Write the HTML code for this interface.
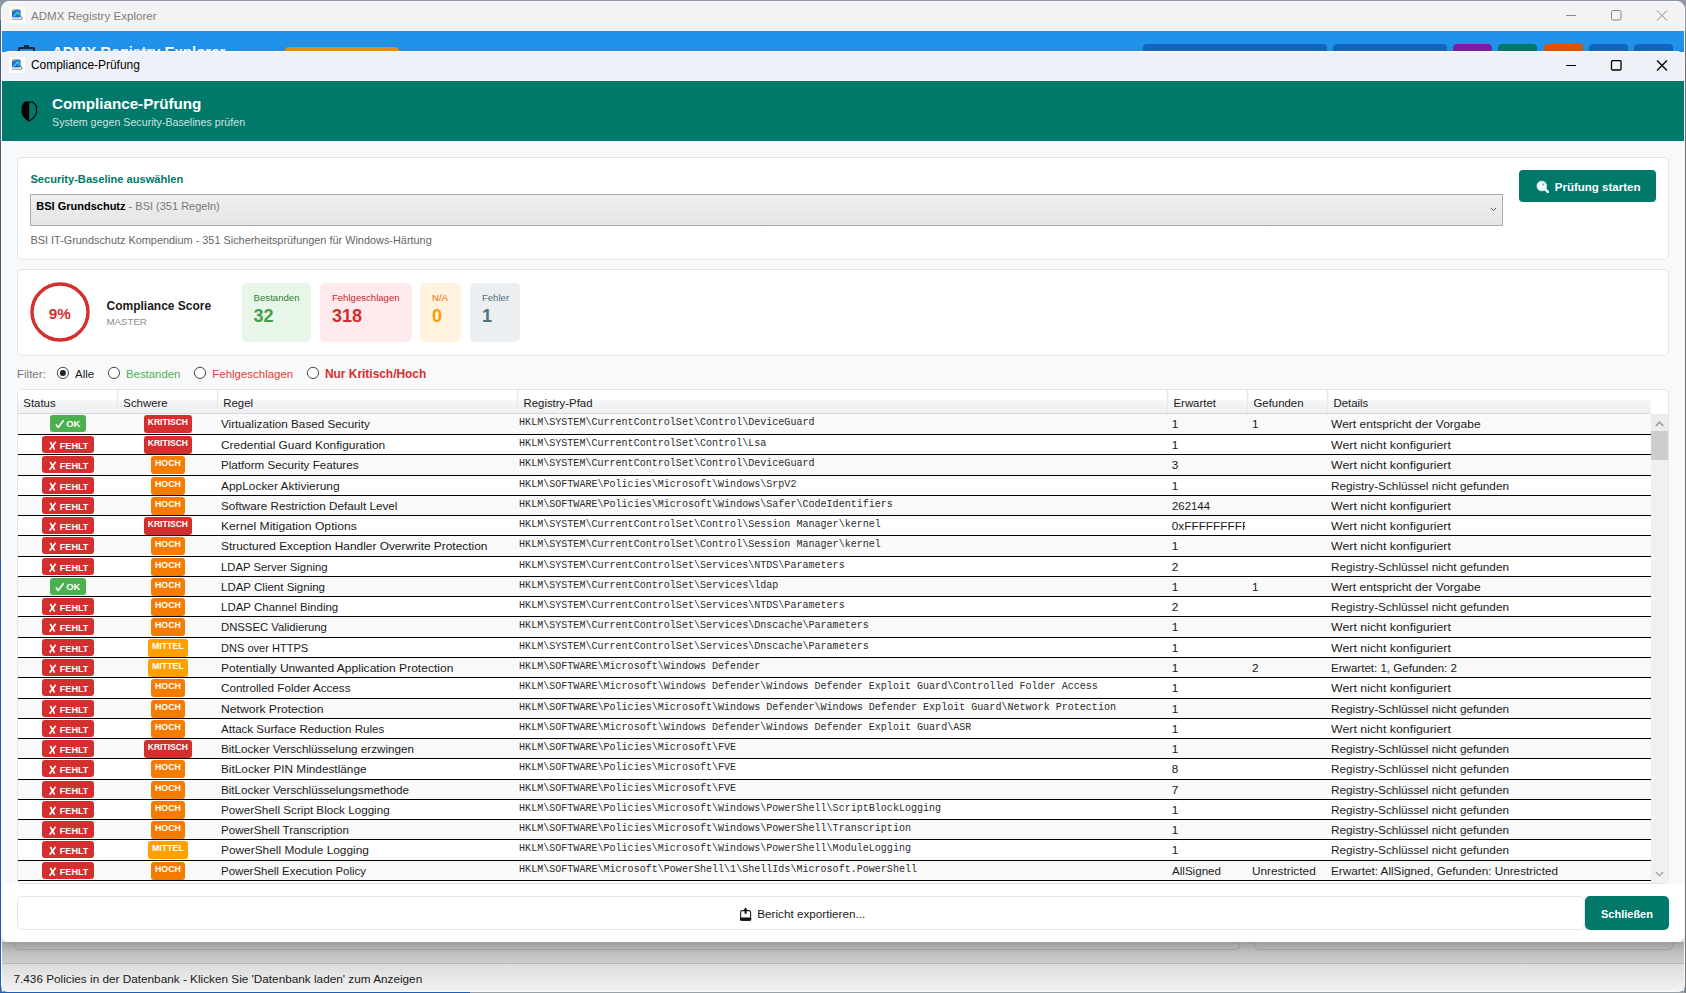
<!DOCTYPE html><html><head><meta charset="utf-8"><style>
*{margin:0;padding:0;box-sizing:border-box}
html,body{width:1686px;height:993px;overflow:hidden;background:#8a96a6;font-family:"Liberation Sans",sans-serif}
.t{position:absolute;white-space:nowrap;line-height:1.117}
.b{position:absolute}
</style></head><body><div class="b" style="left:0px;top:20px;width:1px;height:973px;background:#46647e"></div>
<div class="b" style="left:0px;top:560px;width:1px;height:433px;background:#1d5fb5"></div>
<div class="b" style="left:0px;top:992px;width:470px;height:1px;background:#1d5fb5"></div>
<div class="b" style="left:470px;top:992px;width:1216px;height:1px;background:#9aa0a8"></div>
<div class="b" style="left:1685px;top:30px;width:1px;height:963px;background:#737378"></div>
<div class="b" style="left:1px;top:1px;width:1684px;height:991px;background:#f3f3f3;border-radius:8px 8px 7px 7px;border:1px solid #fbfbfb"></div>
<div class="b" style="left:2px;top:31px;width:1682px;height:21px;background:#2192ea"></div>
<div class="t" style="left:52.00px;top:44.22px;font-size:15px;font-weight:bold;color:#fff;font-family:'Liberation Sans',sans-serif;">ADMX Registry Explorer</div>
<div class="b" style="left:18px;top:47px;width:17px;height:13px;border:2px solid #1b2a3a;border-radius:2px"></div>
<div class="b" style="left:24px;top:45px;width:5px;height:3px;background:#1b2a3a"></div>
<div class="b" style="left:285px;top:47px;width:114px;height:13px;background:#e8900c;border-radius:4px"></div>
<div class="b" style="left:1143px;top:44px;width:184px;height:16px;background:#1565c0;border-radius:4px"></div>
<div class="b" style="left:1333px;top:44px;width:114px;height:16px;background:#1565c0;border-radius:4px"></div>
<div class="b" style="left:1453px;top:44px;width:39px;height:16px;background:#7b1fa2;border-radius:4px"></div>
<div class="b" style="left:1498px;top:44px;width:39px;height:16px;background:#00796b;border-radius:4px"></div>
<div class="b" style="left:1544px;top:44px;width:39px;height:16px;background:#e65100;border-radius:4px"></div>
<div class="b" style="left:1589px;top:44px;width:39px;height:16px;background:#1565c0;border-radius:4px"></div>
<div class="b" style="left:1634px;top:44px;width:39px;height:16px;background:#1565c0;border-radius:4px"></div>
<div class="b" style="left:2px;top:2px;width:1682px;height:29px;background:#f3f3f3;border-radius:7px 7px 0 0"></div>
<svg class="b" style="left:9px;top:7px;" width="16" height="16" viewBox="0 0 16 16"><rect x="0" y="0" width="16" height="16" fill="#fdfdfe"/><rect x="3" y="2.6" width="8.6" height="8" rx="1.4" fill="#1f6fd6"/><rect x="3" y="2.2" width="3.2" height="1.6" rx="0.6" fill="#e8c24a"/><path d="M4.5 9.5 L9.5 4" stroke="#3fd0f0" stroke-width="1.2"/><circle cx="9.8" cy="6.8" r="1.3" fill="#4ccf5a"/><path d="M3 12.3 H13" stroke="#8c98a4" stroke-width="1"/><path d="M10.8 8.5 Q13.5 9.5 13 12" stroke="#5a7a98" stroke-width="1" fill="none"/></svg>
<div class="t" style="left:31.00px;top:9.50px;font-size:11.6px;font-weight:normal;color:#7f7f7f;font-family:'Liberation Sans',sans-serif;">ADMX Registry Explorer</div>
<div class="b" style="left:1566px;top:15px;width:10px;height:1px;background:#8a8a8a"></div><svg class="b" style="left:1610px;top:10px;" width="12" height="11" viewBox="0 0 12 11"><rect x="1.5" y="0.5" width="9.5" height="9.5" rx="1.3" fill="none" stroke="#8a8a8a" stroke-width="1"/></svg><svg class="b" style="left:1656px;top:10px;" width="12" height="11" viewBox="0 0 12 11"><path d="M1 0.5 L11 10.5 M11 0.5 L1 10.5" stroke="#8a8a8a" stroke-width="1"/></svg>
<div class="b" style="left:2px;top:942px;width:1682px;height:21px;background:linear-gradient(#b0b0b0,#cdcdcd)"></div>
<div class="b" style="left:14px;top:930px;width:1226px;height:20px;border:1px solid #a3a3a3;border-top:none;border-radius:0 0 5px 5px"></div>
<div class="b" style="left:1254px;top:930px;width:419px;height:20px;border:1px solid #a3a3a3;border-top:none;border-radius:0 0 5px 5px"></div>
<div class="b" style="left:2px;top:963px;width:1682px;height:28px;background:linear-gradient(#dcdcdc,#f2f2f2);border-top:1px solid #b8b8b8"></div>
<div class="t" style="left:13.50px;top:972.14px;font-size:11.78px;font-weight:normal;color:#1a1a1a;font-family:'Liberation Sans',sans-serif;">7.436 Policies in der Datenbank - Klicken Sie &#x27;Datenbank laden&#x27; zum Anzeigen</div>
<div class="b" style="left:1px;top:51px;width:1684px;height:891px;background:linear-gradient(#eef2f8 0,#eef2f8 30px,#fff 30px);border-radius:8px;border:1px solid #fcfcfd;box-shadow:0 3px 8px rgba(0,0,0,0.16)"></div>
<svg class="b" style="left:9px;top:57px;" width="16" height="16" viewBox="0 0 16 16"><rect x="0" y="0" width="16" height="16" fill="#fdfdfe"/><rect x="3" y="2.6" width="8.6" height="8" rx="1.4" fill="#1f6fd6"/><rect x="3" y="2.2" width="3.2" height="1.6" rx="0.6" fill="#e8c24a"/><path d="M4.5 9.5 L9.5 4" stroke="#3fd0f0" stroke-width="1.2"/><circle cx="9.8" cy="6.8" r="1.3" fill="#4ccf5a"/><path d="M3 12.3 H13" stroke="#8c98a4" stroke-width="1"/><path d="M10.8 8.5 Q13.5 9.5 13 12" stroke="#5a7a98" stroke-width="1" fill="none"/></svg>
<div class="t" style="left:31.00px;top:59.19px;font-size:11.95px;font-weight:normal;color:#000;font-family:'Liberation Sans',sans-serif;">Compliance-Prüfung</div>
<div class="b" style="left:1566px;top:65px;width:10px;height:1.2999999999999972px;background:#000"></div><svg class="b" style="left:1610px;top:60px;" width="12" height="11" viewBox="0 0 12 11"><rect x="1.5" y="0.5" width="9.5" height="9.5" rx="1.3" fill="none" stroke="#000" stroke-width="1.3"/></svg><svg class="b" style="left:1656px;top:60px;" width="12" height="11" viewBox="0 0 12 11"><path d="M1 0.5 L11 10.5 M11 0.5 L1 10.5" stroke="#000" stroke-width="1.3"/></svg>
<div class="b" style="left:2px;top:81px;width:1682px;height:60px;background:#00796b"></div>
<svg class="b" style="left:14px;top:96px;" width="30" height="30" viewBox="0 0 30 30"><path d="M11.2 6.2 H18.8 L22.5 10.2 V16 Q22 21 15.2 25 Q9.5 21.5 8.2 17 V11 Q9 8 11.2 6.2 Z" fill="none" stroke="#000" stroke-width="1.2"/><path d="M11.2 6.2 H15.2 V25 Q9.5 21.5 8.2 17 V11 Q9 8 11.2 6.2 Z" fill="#000"/></svg>
<div class="t" style="left:52.00px;top:96.44px;font-size:15.2px;font-weight:bold;color:#fff;font-family:'Liberation Sans',sans-serif;">Compliance-Prüfung</div>
<div class="t" style="left:52.00px;top:117.02px;font-size:10.7px;font-weight:normal;color:rgba(255,255,255,0.82);font-family:'Liberation Sans',sans-serif;">System gegen Security-Baselines prüfen</div>
<div class="b" style="left:2px;top:141px;width:1682px;height:743px;background:#f8f9fa"></div>
<div class="b" style="left:17px;top:157px;width:1652px;height:103px;background:#fff;border:1px solid #e3e5e8;border-radius:5px"></div>
<div class="t" style="left:30.40px;top:172.95px;font-size:11.1px;font-weight:bold;color:#00796b;font-family:'Liberation Sans',sans-serif;">Security-Baseline auswählen</div>
<div class="b" style="left:30px;top:194px;width:1473px;height:32px;background:linear-gradient(#f0f0f0,#e5e5e5);border:1px solid #acacac"></div>
<div class="t" style="left:36.3px;top:199.84px;font-size:11px;color:#000"><b>BSI Grundschutz</b><span style="color:#777"> - BSI (351 Regeln)</span></div>
<svg class="b" style="left:1490px;top:207px;" width="7" height="5" viewBox="0 0 7 5"><path d="M1 1 L3.5 3.6 L6 1" stroke="#555" fill="none" stroke-width="1"/></svg>
<div class="t" style="left:30.40px;top:234.14px;font-size:10.9px;font-weight:normal;color:#666;font-family:'Liberation Sans',sans-serif;">BSI IT-Grundschutz Kompendium - 351 Sicherheitsprüfungen für Windows-Härtung</div>
<div class="b" style="left:1519px;top:170px;width:137px;height:32px;background:#00796b;border-radius:4px"></div>
<svg class="b" style="left:1536px;top:180px;" width="14" height="14" viewBox="0 0 14 14"><path d="M8.5 8.5 L11.8 11.8" stroke="#f8f8f8" stroke-width="2.6" stroke-linecap="round"/><circle cx="5.8" cy="6" r="4.8" fill="#f4fbff" stroke="#e8f4fa" stroke-width="0.8"/><circle cx="7.3" cy="4.5" r="1" fill="#5ab4e6"/></svg>
<div class="t" style="left:1554.80px;top:180.59px;font-size:11.5px;font-weight:bold;color:#fff;font-family:'Liberation Sans',sans-serif;">Prüfung starten</div>
<div class="b" style="left:17px;top:269px;width:1652px;height:87px;background:#fff;border:1px solid #e3e5e8;border-radius:5px"></div>
<svg class="b" style="left:30px;top:282px;" width="60" height="60" viewBox="0 0 60 60"><circle cx="30" cy="30" r="28" fill="none" stroke="#d32f2f" stroke-width="3.4"/></svg>
<div class="t" style="left:-240.20px;width:600px;text-align:center;top:305.05px;font-size:15.3px;font-weight:bold;color:#d32f2f;font-family:'Liberation Sans',sans-serif;">9%</div>
<div class="t" style="left:106.50px;top:300.24px;font-size:12px;font-weight:bold;color:#1a1a1a;font-family:'Liberation Sans',sans-serif;">Compliance Score</div>
<div class="t" style="left:106.50px;top:317.22px;font-size:9.7px;font-weight:normal;color:#8a8a8a;font-family:'Liberation Sans',sans-serif;">MASTER</div>
<div class="b" style="left:242px;top:282.5px;width:69px;height:59.80000000000001px;background:#e8f5e9;border-radius:5px"></div>
<div class="t" style="left:253.60px;top:292.61px;font-size:9.6px;font-weight:normal;color:#2e7d32;font-family:'Liberation Sans',sans-serif;">Bestanden</div>
<div class="t" style="left:253.60px;top:306.41px;font-size:18px;font-weight:bold;color:#43a047;font-family:'Liberation Sans',sans-serif;">32</div>
<div class="b" style="left:320px;top:282.5px;width:92px;height:59.80000000000001px;background:#ffebee;border-radius:5px"></div>
<div class="t" style="left:331.90px;top:292.61px;font-size:9.6px;font-weight:normal;color:#c62828;font-family:'Liberation Sans',sans-serif;">Fehlgeschlagen</div>
<div class="t" style="left:331.90px;top:306.41px;font-size:18px;font-weight:bold;color:#d32f2f;font-family:'Liberation Sans',sans-serif;">318</div>
<div class="b" style="left:420px;top:282.5px;width:41px;height:59.80000000000001px;background:#fff3e0;border-radius:5px"></div>
<div class="t" style="left:432.00px;top:292.61px;font-size:9.6px;font-weight:normal;color:#ef6c00;font-family:'Liberation Sans',sans-serif;">N/A</div>
<div class="t" style="left:432.00px;top:306.41px;font-size:18px;font-weight:bold;color:#ff9800;font-family:'Liberation Sans',sans-serif;">0</div>
<div class="b" style="left:470px;top:282.5px;width:50px;height:59.80000000000001px;background:#eceff1;border-radius:5px"></div>
<div class="t" style="left:481.90px;top:292.61px;font-size:9.6px;font-weight:normal;color:#546e7a;font-family:'Liberation Sans',sans-serif;">Fehler</div>
<div class="t" style="left:481.90px;top:306.41px;font-size:18px;font-weight:bold;color:#546e7a;font-family:'Liberation Sans',sans-serif;">1</div>
<div class="t" style="left:17.10px;top:368.05px;font-size:11.44px;font-weight:normal;color:#777;font-family:'Liberation Sans',sans-serif;">Filter:</div>
<svg class="b" style="left:55px;top:365px;" width="14" height="14" viewBox="0 0 14 14"><circle cx="7.90" cy="7.90" r="5.6" fill="#fff" stroke="#4a4a4a" stroke-width="1"/><circle cx="7.90" cy="7.90" r="3" fill="#1f241f"/></svg>
<div class="t" style="left:75.00px;top:367.99px;font-size:11.5px;font-weight:normal;color:#1a1a1a;font-family:'Liberation Sans',sans-serif;">Alle</div>
<svg class="b" style="left:107px;top:365px;" width="14" height="14" viewBox="0 0 14 14"><circle cx="7.00" cy="7.90" r="5.6" fill="#fff" stroke="#4a4a4a" stroke-width="1"/></svg>
<div class="t" style="left:126.00px;top:368.10px;font-size:11.38px;font-weight:normal;color:#4caf50;font-family:'Liberation Sans',sans-serif;">Bestanden</div>
<svg class="b" style="left:193px;top:365px;" width="14" height="14" viewBox="0 0 14 14"><circle cx="7.00" cy="7.90" r="5.6" fill="#fff" stroke="#4a4a4a" stroke-width="1"/></svg>
<div class="t" style="left:212.30px;top:368.03px;font-size:11.46px;font-weight:normal;color:#e53935;font-family:'Liberation Sans',sans-serif;">Fehlgeschlagen</div>
<svg class="b" style="left:306px;top:365px;" width="14" height="14" viewBox="0 0 14 14"><circle cx="7.00" cy="7.90" r="5.6" fill="#fff" stroke="#4a4a4a" stroke-width="1"/></svg>
<div class="t" style="left:325.00px;top:367.61px;font-size:11.92px;font-weight:bold;color:#d32f2f;font-family:'Liberation Sans',sans-serif;">Nur Kritisch/Hoch</div>
<div class="b" style="left:17px;top:389px;width:1652px;height:495px;background:#fff;border:1px solid #e3e5e8;border-radius:5px"></div>
<div class="b" style="left:18px;top:390px;width:1633px;height:24px;background:linear-gradient(#fff 0,#fff 45%,#f3f4f6 46%,#eef0f2 100%);border-bottom:1px solid #d6d8db"></div>
<div class="b" style="left:117px;top:390px;width:2px;height:23px;background:#e6e7e9;border-right:1px solid #f6f6f6"></div>
<div class="b" style="left:217px;top:390px;width:2px;height:23px;background:#e6e7e9;border-right:1px solid #f6f6f6"></div>
<div class="b" style="left:517px;top:390px;width:2px;height:23px;background:#e6e7e9;border-right:1px solid #f6f6f6"></div>
<div class="b" style="left:1167px;top:390px;width:2px;height:23px;background:#e6e7e9;border-right:1px solid #f6f6f6"></div>
<div class="b" style="left:1247px;top:390px;width:2px;height:23px;background:#e6e7e9;border-right:1px solid #f6f6f6"></div>
<div class="b" style="left:1327px;top:390px;width:2px;height:23px;background:#e6e7e9;border-right:1px solid #f6f6f6"></div>
<div class="t" style="left:23.30px;top:396.88px;font-size:11.4px;font-weight:normal;color:#1a1a1a;font-family:'Liberation Sans',sans-serif;">Status</div>
<div class="t" style="left:123.30px;top:396.88px;font-size:11.4px;font-weight:normal;color:#1a1a1a;font-family:'Liberation Sans',sans-serif;">Schwere</div>
<div class="t" style="left:223.30px;top:396.88px;font-size:11.4px;font-weight:normal;color:#1a1a1a;font-family:'Liberation Sans',sans-serif;">Regel</div>
<div class="t" style="left:523.50px;top:396.88px;font-size:11.4px;font-weight:normal;color:#1a1a1a;font-family:'Liberation Sans',sans-serif;">Registry-Pfad</div>
<div class="t" style="left:1173.50px;top:396.88px;font-size:11.4px;font-weight:normal;color:#1a1a1a;font-family:'Liberation Sans',sans-serif;">Erwartet</div>
<div class="t" style="left:1253.50px;top:396.88px;font-size:11.4px;font-weight:normal;color:#1a1a1a;font-family:'Liberation Sans',sans-serif;">Gefunden</div>
<div class="t" style="left:1333.50px;top:396.88px;font-size:11.4px;font-weight:normal;color:#1a1a1a;font-family:'Liberation Sans',sans-serif;">Details</div>
<div class="b" style="left:18px;top:414px;width:1633px;height:20px;background:#f9f9f9"></div>
<div class="b" style="left:18px;top:434px;width:1633px;height:1px;background:#000"></div>
<div class="b" style="left:50.2px;top:415.05px;width:35.5px;height:17.4px;background:#4caf50;border-radius:3px"></div>
<svg class="b" style="left:50.2px;top:415.05px;" width="20" height="17" viewBox="0 0 20 17"><path d="M5.9 9.4 L8.1 12.5 L13.6 5.2" stroke="#fff" stroke-width="1.6" fill="none" stroke-linejoin="round"/></svg>
<div class="t" style="left:66.20px;top:419.34px;font-size:9.4px;font-weight:bold;color:#fff;font-family:'Liberation Sans',sans-serif;">OK</div>
<div class="b" style="left:143.90px;top:415.10px;width:48px;height:17.6px;background:#d32f2f;border-radius:3px"></div>
<div class="t" style="left:-132.10px;width:600px;text-align:center;top:418.21px;font-size:8.5px;font-weight:bold;color:#fff;font-family:'Liberation Sans',sans-serif;">KRITISCH</div>
<div class="t" style="left:221.40px;top:417.62px;font-size:11.8px;font-weight:normal;color:#1a1a1a;font-family:'Liberation Sans',sans-serif;transform:scaleX(0.9924);transform-origin:0 0;">Virtualization Based Security</div>
<div class="t" style="left:519.10px;top:416.50px;font-size:10.05px;font-weight:normal;color:#2a2a2a;font-family:'Liberation Mono',sans-serif;">HKLM\SYSTEM\CurrentControlSet\Control\DeviceGuard</div>
<div class="t" style="left:1171.80px;top:417.62px;font-size:11.8px;font-weight:normal;color:#1a1a1a;font-family:'Liberation Sans',sans-serif;">1</div>
<div class="t" style="left:1252.00px;top:417.62px;font-size:11.8px;font-weight:normal;color:#1a1a1a;font-family:'Liberation Sans',sans-serif;">1</div>
<div class="t" style="left:1331.30px;top:417.62px;font-size:11.8px;font-weight:normal;color:#1a1a1a;font-family:'Liberation Sans',sans-serif;transform:scaleX(1.0200);transform-origin:0 0;">Wert entspricht der Vorgabe</div>
<div class="b" style="left:18px;top:435px;width:1633px;height:19px;background:#fff"></div>
<div class="b" style="left:18px;top:454px;width:1633px;height:1px;background:#000"></div>
<div class="b" style="left:41.9px;top:436.05px;width:52px;height:17.2px;background:#d32f2f;border-radius:3px"></div>
<svg class="b" style="left:41.9px;top:436.05px;" width="20" height="17" viewBox="0 0 20 17"><path d="M8.3 5.9 L12.6 13.6 M13.7 5.7 L7.6 13.8" stroke="#fff" stroke-width="1.7" fill="none"/></svg>
<div class="t" style="left:59.80px;top:440.61px;font-size:9.1px;font-weight:bold;color:#fff;font-family:'Liberation Sans',sans-serif;">FEHLT</div>
<div class="b" style="left:143.90px;top:436.10px;width:48px;height:17.6px;background:#d32f2f;border-radius:3px"></div>
<div class="t" style="left:-132.10px;width:600px;text-align:center;top:439.21px;font-size:8.5px;font-weight:bold;color:#fff;font-family:'Liberation Sans',sans-serif;">KRITISCH</div>
<div class="t" style="left:221.40px;top:438.62px;font-size:11.8px;font-weight:normal;color:#1a1a1a;font-family:'Liberation Sans',sans-serif;transform:scaleX(1.0096);transform-origin:0 0;">Credential Guard Konfiguration</div>
<div class="t" style="left:519.10px;top:437.50px;font-size:10.05px;font-weight:normal;color:#2a2a2a;font-family:'Liberation Mono',sans-serif;">HKLM\SYSTEM\CurrentControlSet\Control\Lsa</div>
<div class="t" style="left:1171.80px;top:438.62px;font-size:11.8px;font-weight:normal;color:#1a1a1a;font-family:'Liberation Sans',sans-serif;">1</div>
<div class="t" style="left:1331.30px;top:438.62px;font-size:11.8px;font-weight:normal;color:#1a1a1a;font-family:'Liberation Sans',sans-serif;transform:scaleX(1.0470);transform-origin:0 0;">Wert nicht konfiguriert</div>
<div class="b" style="left:18px;top:455px;width:1633px;height:20px;background:#f9f9f9"></div>
<div class="b" style="left:18px;top:475px;width:1633px;height:1px;background:#000"></div>
<div class="b" style="left:41.9px;top:456.05px;width:52px;height:17.2px;background:#d32f2f;border-radius:3px"></div>
<svg class="b" style="left:41.9px;top:456.05px;" width="20" height="17" viewBox="0 0 20 17"><path d="M8.3 5.9 L12.6 13.6 M13.7 5.7 L7.6 13.8" stroke="#fff" stroke-width="1.7" fill="none"/></svg>
<div class="t" style="left:59.80px;top:460.61px;font-size:9.1px;font-weight:bold;color:#fff;font-family:'Liberation Sans',sans-serif;">FEHLT</div>
<div class="b" style="left:150.90px;top:456.10px;width:34px;height:17.6px;background:#f57c00;border-radius:3px"></div>
<div class="t" style="left:-132.10px;width:600px;text-align:center;top:458.94px;font-size:8.8px;font-weight:bold;color:#fff;font-family:'Liberation Sans',sans-serif;">HOCH</div>
<div class="t" style="left:221.40px;top:458.62px;font-size:11.8px;font-weight:normal;color:#1a1a1a;font-family:'Liberation Sans',sans-serif;transform:scaleX(0.9846);transform-origin:0 0;">Platform Security Features</div>
<div class="t" style="left:519.10px;top:457.50px;font-size:10.05px;font-weight:normal;color:#2a2a2a;font-family:'Liberation Mono',sans-serif;">HKLM\SYSTEM\CurrentControlSet\Control\DeviceGuard</div>
<div class="t" style="left:1171.80px;top:458.62px;font-size:11.8px;font-weight:normal;color:#1a1a1a;font-family:'Liberation Sans',sans-serif;">3</div>
<div class="t" style="left:1331.30px;top:458.62px;font-size:11.8px;font-weight:normal;color:#1a1a1a;font-family:'Liberation Sans',sans-serif;transform:scaleX(1.0470);transform-origin:0 0;">Wert nicht konfiguriert</div>
<div class="b" style="left:18px;top:476px;width:1633px;height:19px;background:#fff"></div>
<div class="b" style="left:18px;top:495px;width:1633px;height:1px;background:#000"></div>
<div class="b" style="left:41.9px;top:477.05px;width:52px;height:17.2px;background:#d32f2f;border-radius:3px"></div>
<svg class="b" style="left:41.9px;top:477.05px;" width="20" height="17" viewBox="0 0 20 17"><path d="M8.3 5.9 L12.6 13.6 M13.7 5.7 L7.6 13.8" stroke="#fff" stroke-width="1.7" fill="none"/></svg>
<div class="t" style="left:59.80px;top:481.61px;font-size:9.1px;font-weight:bold;color:#fff;font-family:'Liberation Sans',sans-serif;">FEHLT</div>
<div class="b" style="left:150.90px;top:477.10px;width:34px;height:17.6px;background:#f57c00;border-radius:3px"></div>
<div class="t" style="left:-132.10px;width:600px;text-align:center;top:479.94px;font-size:8.8px;font-weight:bold;color:#fff;font-family:'Liberation Sans',sans-serif;">HOCH</div>
<div class="t" style="left:221.40px;top:479.62px;font-size:11.8px;font-weight:normal;color:#1a1a1a;font-family:'Liberation Sans',sans-serif;transform:scaleX(1.0099);transform-origin:0 0;">AppLocker Aktivierung</div>
<div class="t" style="left:519.10px;top:478.50px;font-size:10.05px;font-weight:normal;color:#2a2a2a;font-family:'Liberation Mono',sans-serif;">HKLM\SOFTWARE\Policies\Microsoft\Windows\SrpV2</div>
<div class="t" style="left:1171.80px;top:479.62px;font-size:11.8px;font-weight:normal;color:#1a1a1a;font-family:'Liberation Sans',sans-serif;">1</div>
<div class="t" style="left:1331.30px;top:479.62px;font-size:11.8px;font-weight:normal;color:#1a1a1a;font-family:'Liberation Sans',sans-serif;transform:scaleX(0.9980);transform-origin:0 0;">Registry-Schlüssel nicht gefunden</div>
<div class="b" style="left:18px;top:496px;width:1633px;height:19px;background:#f9f9f9"></div>
<div class="b" style="left:18px;top:515px;width:1633px;height:1px;background:#000"></div>
<div class="b" style="left:41.9px;top:497.05px;width:52px;height:17.2px;background:#d32f2f;border-radius:3px"></div>
<svg class="b" style="left:41.9px;top:497.05px;" width="20" height="17" viewBox="0 0 20 17"><path d="M8.3 5.9 L12.6 13.6 M13.7 5.7 L7.6 13.8" stroke="#fff" stroke-width="1.7" fill="none"/></svg>
<div class="t" style="left:59.80px;top:501.61px;font-size:9.1px;font-weight:bold;color:#fff;font-family:'Liberation Sans',sans-serif;">FEHLT</div>
<div class="b" style="left:150.90px;top:497.10px;width:34px;height:17.6px;background:#f57c00;border-radius:3px"></div>
<div class="t" style="left:-132.10px;width:600px;text-align:center;top:499.94px;font-size:8.8px;font-weight:bold;color:#fff;font-family:'Liberation Sans',sans-serif;">HOCH</div>
<div class="t" style="left:221.40px;top:499.62px;font-size:11.8px;font-weight:normal;color:#1a1a1a;font-family:'Liberation Sans',sans-serif;transform:scaleX(0.9927);transform-origin:0 0;">Software Restriction Default Level</div>
<div class="t" style="left:519.10px;top:498.50px;font-size:10.05px;font-weight:normal;color:#2a2a2a;font-family:'Liberation Mono',sans-serif;">HKLM\SOFTWARE\Policies\Microsoft\Windows\Safer\CodeIdentifiers</div>
<div class="t" style="left:1171.80px;top:499.62px;font-size:11.8px;font-weight:normal;color:#1a1a1a;font-family:'Liberation Sans',sans-serif;transform:scaleX(0.9653);transform-origin:0 0;">262144</div>
<div class="t" style="left:1331.30px;top:499.62px;font-size:11.8px;font-weight:normal;color:#1a1a1a;font-family:'Liberation Sans',sans-serif;transform:scaleX(1.0470);transform-origin:0 0;">Wert nicht konfiguriert</div>
<div class="b" style="left:18px;top:516px;width:1633px;height:19px;background:#fff"></div>
<div class="b" style="left:18px;top:535px;width:1633px;height:1px;background:#000"></div>
<div class="b" style="left:41.9px;top:517.05px;width:52px;height:17.2px;background:#d32f2f;border-radius:3px"></div>
<svg class="b" style="left:41.9px;top:517.05px;" width="20" height="17" viewBox="0 0 20 17"><path d="M8.3 5.9 L12.6 13.6 M13.7 5.7 L7.6 13.8" stroke="#fff" stroke-width="1.7" fill="none"/></svg>
<div class="t" style="left:59.80px;top:521.61px;font-size:9.1px;font-weight:bold;color:#fff;font-family:'Liberation Sans',sans-serif;">FEHLT</div>
<div class="b" style="left:143.90px;top:517.10px;width:48px;height:17.6px;background:#d32f2f;border-radius:3px"></div>
<div class="t" style="left:-132.10px;width:600px;text-align:center;top:520.21px;font-size:8.5px;font-weight:bold;color:#fff;font-family:'Liberation Sans',sans-serif;">KRITISCH</div>
<div class="t" style="left:221.40px;top:519.62px;font-size:11.8px;font-weight:normal;color:#1a1a1a;font-family:'Liberation Sans',sans-serif;transform:scaleX(1.0304);transform-origin:0 0;">Kernel Mitigation Options</div>
<div class="t" style="left:519.10px;top:518.50px;font-size:10.05px;font-weight:normal;color:#2a2a2a;font-family:'Liberation Mono',sans-serif;">HKLM\SYSTEM\CurrentControlSet\Control\Session Manager\kernel</div>
<div class="b" style="left:1168px;top:516.00px;width:77px;height:19px;overflow:hidden"><div class="t" style="left:3.80px;top:3.62px;font-size:11.8px;font-weight:normal;color:#1a1a1a;font-family:'Liberation Sans',sans-serif;">0xFFFFFFFFFFFF</div></div>
<div class="t" style="left:1331.30px;top:519.62px;font-size:11.8px;font-weight:normal;color:#1a1a1a;font-family:'Liberation Sans',sans-serif;transform:scaleX(1.0470);transform-origin:0 0;">Wert nicht konfiguriert</div>
<div class="b" style="left:18px;top:536px;width:1633px;height:20px;background:#f9f9f9"></div>
<div class="b" style="left:18px;top:556px;width:1633px;height:1px;background:#000"></div>
<div class="b" style="left:41.9px;top:537.05px;width:52px;height:17.2px;background:#d32f2f;border-radius:3px"></div>
<svg class="b" style="left:41.9px;top:537.05px;" width="20" height="17" viewBox="0 0 20 17"><path d="M8.3 5.9 L12.6 13.6 M13.7 5.7 L7.6 13.8" stroke="#fff" stroke-width="1.7" fill="none"/></svg>
<div class="t" style="left:59.80px;top:541.61px;font-size:9.1px;font-weight:bold;color:#fff;font-family:'Liberation Sans',sans-serif;">FEHLT</div>
<div class="b" style="left:150.90px;top:537.10px;width:34px;height:17.6px;background:#f57c00;border-radius:3px"></div>
<div class="t" style="left:-132.10px;width:600px;text-align:center;top:539.94px;font-size:8.8px;font-weight:bold;color:#fff;font-family:'Liberation Sans',sans-serif;">HOCH</div>
<div class="t" style="left:221.40px;top:539.62px;font-size:11.8px;font-weight:normal;color:#1a1a1a;font-family:'Liberation Sans',sans-serif;transform:scaleX(1.0082);transform-origin:0 0;">Structured Exception Handler Overwrite Protection</div>
<div class="t" style="left:519.10px;top:538.50px;font-size:10.05px;font-weight:normal;color:#2a2a2a;font-family:'Liberation Mono',sans-serif;">HKLM\SYSTEM\CurrentControlSet\Control\Session Manager\kernel</div>
<div class="t" style="left:1171.80px;top:539.62px;font-size:11.8px;font-weight:normal;color:#1a1a1a;font-family:'Liberation Sans',sans-serif;">1</div>
<div class="t" style="left:1331.30px;top:539.62px;font-size:11.8px;font-weight:normal;color:#1a1a1a;font-family:'Liberation Sans',sans-serif;transform:scaleX(1.0470);transform-origin:0 0;">Wert nicht konfiguriert</div>
<div class="b" style="left:18px;top:557px;width:1633px;height:19px;background:#fff"></div>
<div class="b" style="left:18px;top:576px;width:1633px;height:1px;background:#000"></div>
<div class="b" style="left:41.9px;top:558.05px;width:52px;height:17.2px;background:#d32f2f;border-radius:3px"></div>
<svg class="b" style="left:41.9px;top:558.05px;" width="20" height="17" viewBox="0 0 20 17"><path d="M8.3 5.9 L12.6 13.6 M13.7 5.7 L7.6 13.8" stroke="#fff" stroke-width="1.7" fill="none"/></svg>
<div class="t" style="left:59.80px;top:562.61px;font-size:9.1px;font-weight:bold;color:#fff;font-family:'Liberation Sans',sans-serif;">FEHLT</div>
<div class="b" style="left:150.90px;top:558.10px;width:34px;height:17.6px;background:#f57c00;border-radius:3px"></div>
<div class="t" style="left:-132.10px;width:600px;text-align:center;top:560.94px;font-size:8.8px;font-weight:bold;color:#fff;font-family:'Liberation Sans',sans-serif;">HOCH</div>
<div class="t" style="left:221.40px;top:560.62px;font-size:11.8px;font-weight:normal;color:#1a1a1a;font-family:'Liberation Sans',sans-serif;transform:scaleX(0.9572);transform-origin:0 0;">LDAP Server Signing</div>
<div class="t" style="left:519.10px;top:559.50px;font-size:10.05px;font-weight:normal;color:#2a2a2a;font-family:'Liberation Mono',sans-serif;">HKLM\SYSTEM\CurrentControlSet\Services\NTDS\Parameters</div>
<div class="t" style="left:1171.80px;top:560.62px;font-size:11.8px;font-weight:normal;color:#1a1a1a;font-family:'Liberation Sans',sans-serif;">2</div>
<div class="t" style="left:1331.30px;top:560.62px;font-size:11.8px;font-weight:normal;color:#1a1a1a;font-family:'Liberation Sans',sans-serif;transform:scaleX(0.9980);transform-origin:0 0;">Registry-Schlüssel nicht gefunden</div>
<div class="b" style="left:18px;top:577px;width:1633px;height:19px;background:#f9f9f9"></div>
<div class="b" style="left:18px;top:596px;width:1633px;height:1px;background:#000"></div>
<div class="b" style="left:50.2px;top:578.05px;width:35.5px;height:17.4px;background:#4caf50;border-radius:3px"></div>
<svg class="b" style="left:50.2px;top:578.05px;" width="20" height="17" viewBox="0 0 20 17"><path d="M5.9 9.4 L8.1 12.5 L13.6 5.2" stroke="#fff" stroke-width="1.6" fill="none" stroke-linejoin="round"/></svg>
<div class="t" style="left:66.20px;top:582.34px;font-size:9.4px;font-weight:bold;color:#fff;font-family:'Liberation Sans',sans-serif;">OK</div>
<div class="b" style="left:150.90px;top:578.10px;width:34px;height:17.6px;background:#f57c00;border-radius:3px"></div>
<div class="t" style="left:-132.10px;width:600px;text-align:center;top:580.94px;font-size:8.8px;font-weight:bold;color:#fff;font-family:'Liberation Sans',sans-serif;">HOCH</div>
<div class="t" style="left:221.40px;top:580.62px;font-size:11.8px;font-weight:normal;color:#1a1a1a;font-family:'Liberation Sans',sans-serif;transform:scaleX(0.9749);transform-origin:0 0;">LDAP Client Signing</div>
<div class="t" style="left:519.10px;top:579.50px;font-size:10.05px;font-weight:normal;color:#2a2a2a;font-family:'Liberation Mono',sans-serif;">HKLM\SYSTEM\CurrentControlSet\Services\ldap</div>
<div class="t" style="left:1171.80px;top:580.62px;font-size:11.8px;font-weight:normal;color:#1a1a1a;font-family:'Liberation Sans',sans-serif;">1</div>
<div class="t" style="left:1252.00px;top:580.62px;font-size:11.8px;font-weight:normal;color:#1a1a1a;font-family:'Liberation Sans',sans-serif;">1</div>
<div class="t" style="left:1331.30px;top:580.62px;font-size:11.8px;font-weight:normal;color:#1a1a1a;font-family:'Liberation Sans',sans-serif;transform:scaleX(1.0200);transform-origin:0 0;">Wert entspricht der Vorgabe</div>
<div class="b" style="left:18px;top:597px;width:1633px;height:19px;background:#fff"></div>
<div class="b" style="left:18px;top:616px;width:1633px;height:1px;background:#000"></div>
<div class="b" style="left:41.9px;top:598.05px;width:52px;height:17.2px;background:#d32f2f;border-radius:3px"></div>
<svg class="b" style="left:41.9px;top:598.05px;" width="20" height="17" viewBox="0 0 20 17"><path d="M8.3 5.9 L12.6 13.6 M13.7 5.7 L7.6 13.8" stroke="#fff" stroke-width="1.7" fill="none"/></svg>
<div class="t" style="left:59.80px;top:602.61px;font-size:9.1px;font-weight:bold;color:#fff;font-family:'Liberation Sans',sans-serif;">FEHLT</div>
<div class="b" style="left:150.90px;top:598.10px;width:34px;height:17.6px;background:#f57c00;border-radius:3px"></div>
<div class="t" style="left:-132.10px;width:600px;text-align:center;top:600.94px;font-size:8.8px;font-weight:bold;color:#fff;font-family:'Liberation Sans',sans-serif;">HOCH</div>
<div class="t" style="left:221.40px;top:600.62px;font-size:11.8px;font-weight:normal;color:#1a1a1a;font-family:'Liberation Sans',sans-serif;transform:scaleX(0.9729);transform-origin:0 0;">LDAP Channel Binding</div>
<div class="t" style="left:519.10px;top:599.50px;font-size:10.05px;font-weight:normal;color:#2a2a2a;font-family:'Liberation Mono',sans-serif;">HKLM\SYSTEM\CurrentControlSet\Services\NTDS\Parameters</div>
<div class="t" style="left:1171.80px;top:600.62px;font-size:11.8px;font-weight:normal;color:#1a1a1a;font-family:'Liberation Sans',sans-serif;">2</div>
<div class="t" style="left:1331.30px;top:600.62px;font-size:11.8px;font-weight:normal;color:#1a1a1a;font-family:'Liberation Sans',sans-serif;transform:scaleX(0.9980);transform-origin:0 0;">Registry-Schlüssel nicht gefunden</div>
<div class="b" style="left:18px;top:617px;width:1633px;height:20px;background:#f9f9f9"></div>
<div class="b" style="left:18px;top:637px;width:1633px;height:1px;background:#000"></div>
<div class="b" style="left:41.9px;top:618.05px;width:52px;height:17.2px;background:#d32f2f;border-radius:3px"></div>
<svg class="b" style="left:41.9px;top:618.05px;" width="20" height="17" viewBox="0 0 20 17"><path d="M8.3 5.9 L12.6 13.6 M13.7 5.7 L7.6 13.8" stroke="#fff" stroke-width="1.7" fill="none"/></svg>
<div class="t" style="left:59.80px;top:622.61px;font-size:9.1px;font-weight:bold;color:#fff;font-family:'Liberation Sans',sans-serif;">FEHLT</div>
<div class="b" style="left:150.90px;top:618.10px;width:34px;height:17.6px;background:#f57c00;border-radius:3px"></div>
<div class="t" style="left:-132.10px;width:600px;text-align:center;top:620.94px;font-size:8.8px;font-weight:bold;color:#fff;font-family:'Liberation Sans',sans-serif;">HOCH</div>
<div class="t" style="left:221.40px;top:620.62px;font-size:11.8px;font-weight:normal;color:#1a1a1a;font-family:'Liberation Sans',sans-serif;transform:scaleX(0.9576);transform-origin:0 0;">DNSSEC Validierung</div>
<div class="t" style="left:519.10px;top:619.50px;font-size:10.05px;font-weight:normal;color:#2a2a2a;font-family:'Liberation Mono',sans-serif;">HKLM\SYSTEM\CurrentControlSet\Services\Dnscache\Parameters</div>
<div class="t" style="left:1171.80px;top:620.62px;font-size:11.8px;font-weight:normal;color:#1a1a1a;font-family:'Liberation Sans',sans-serif;">1</div>
<div class="t" style="left:1331.30px;top:620.62px;font-size:11.8px;font-weight:normal;color:#1a1a1a;font-family:'Liberation Sans',sans-serif;transform:scaleX(1.0470);transform-origin:0 0;">Wert nicht konfiguriert</div>
<div class="b" style="left:18px;top:638px;width:1633px;height:19px;background:#fff"></div>
<div class="b" style="left:18px;top:657px;width:1633px;height:1px;background:#000"></div>
<div class="b" style="left:41.9px;top:639.05px;width:52px;height:17.2px;background:#d32f2f;border-radius:3px"></div>
<svg class="b" style="left:41.9px;top:639.05px;" width="20" height="17" viewBox="0 0 20 17"><path d="M8.3 5.9 L12.6 13.6 M13.7 5.7 L7.6 13.8" stroke="#fff" stroke-width="1.7" fill="none"/></svg>
<div class="t" style="left:59.80px;top:643.61px;font-size:9.1px;font-weight:bold;color:#fff;font-family:'Liberation Sans',sans-serif;">FEHLT</div>
<div class="b" style="left:147.90px;top:639.10px;width:40px;height:17.6px;background:#ffa000;border-radius:3px"></div>
<div class="t" style="left:-132.10px;width:600px;text-align:center;top:641.94px;font-size:8.8px;font-weight:bold;color:#fff;font-family:'Liberation Sans',sans-serif;">MITTEL</div>
<div class="t" style="left:221.40px;top:641.62px;font-size:11.8px;font-weight:normal;color:#1a1a1a;font-family:'Liberation Sans',sans-serif;transform:scaleX(0.9368);transform-origin:0 0;">DNS over HTTPS</div>
<div class="t" style="left:519.10px;top:640.50px;font-size:10.05px;font-weight:normal;color:#2a2a2a;font-family:'Liberation Mono',sans-serif;">HKLM\SYSTEM\CurrentControlSet\Services\Dnscache\Parameters</div>
<div class="t" style="left:1171.80px;top:641.62px;font-size:11.8px;font-weight:normal;color:#1a1a1a;font-family:'Liberation Sans',sans-serif;">1</div>
<div class="t" style="left:1331.30px;top:641.62px;font-size:11.8px;font-weight:normal;color:#1a1a1a;font-family:'Liberation Sans',sans-serif;transform:scaleX(1.0470);transform-origin:0 0;">Wert nicht konfiguriert</div>
<div class="b" style="left:18px;top:658px;width:1633px;height:19px;background:#f9f9f9"></div>
<div class="b" style="left:18px;top:677px;width:1633px;height:1px;background:#000"></div>
<div class="b" style="left:41.9px;top:659.05px;width:52px;height:17.2px;background:#d32f2f;border-radius:3px"></div>
<svg class="b" style="left:41.9px;top:659.05px;" width="20" height="17" viewBox="0 0 20 17"><path d="M8.3 5.9 L12.6 13.6 M13.7 5.7 L7.6 13.8" stroke="#fff" stroke-width="1.7" fill="none"/></svg>
<div class="t" style="left:59.80px;top:663.61px;font-size:9.1px;font-weight:bold;color:#fff;font-family:'Liberation Sans',sans-serif;">FEHLT</div>
<div class="b" style="left:147.90px;top:659.10px;width:40px;height:17.6px;background:#ffa000;border-radius:3px"></div>
<div class="t" style="left:-132.10px;width:600px;text-align:center;top:661.94px;font-size:8.8px;font-weight:bold;color:#fff;font-family:'Liberation Sans',sans-serif;">MITTEL</div>
<div class="t" style="left:221.40px;top:661.62px;font-size:11.8px;font-weight:normal;color:#1a1a1a;font-family:'Liberation Sans',sans-serif;transform:scaleX(1.0210);transform-origin:0 0;">Potentially Unwanted Application Protection</div>
<div class="t" style="left:519.10px;top:660.50px;font-size:10.05px;font-weight:normal;color:#2a2a2a;font-family:'Liberation Mono',sans-serif;">HKLM\SOFTWARE\Microsoft\Windows Defender</div>
<div class="t" style="left:1171.80px;top:661.62px;font-size:11.8px;font-weight:normal;color:#1a1a1a;font-family:'Liberation Sans',sans-serif;">1</div>
<div class="t" style="left:1252.00px;top:661.62px;font-size:11.8px;font-weight:normal;color:#1a1a1a;font-family:'Liberation Sans',sans-serif;">2</div>
<div class="t" style="left:1331.30px;top:661.62px;font-size:11.8px;font-weight:normal;color:#1a1a1a;font-family:'Liberation Sans',sans-serif;transform:scaleX(0.9796);transform-origin:0 0;">Erwartet: 1, Gefunden: 2</div>
<div class="b" style="left:18px;top:678px;width:1633px;height:20px;background:#fff"></div>
<div class="b" style="left:18px;top:698px;width:1633px;height:1px;background:#000"></div>
<div class="b" style="left:41.9px;top:679.05px;width:52px;height:17.2px;background:#d32f2f;border-radius:3px"></div>
<svg class="b" style="left:41.9px;top:679.05px;" width="20" height="17" viewBox="0 0 20 17"><path d="M8.3 5.9 L12.6 13.6 M13.7 5.7 L7.6 13.8" stroke="#fff" stroke-width="1.7" fill="none"/></svg>
<div class="t" style="left:59.80px;top:683.61px;font-size:9.1px;font-weight:bold;color:#fff;font-family:'Liberation Sans',sans-serif;">FEHLT</div>
<div class="b" style="left:150.90px;top:679.10px;width:34px;height:17.6px;background:#f57c00;border-radius:3px"></div>
<div class="t" style="left:-132.10px;width:600px;text-align:center;top:681.94px;font-size:8.8px;font-weight:bold;color:#fff;font-family:'Liberation Sans',sans-serif;">HOCH</div>
<div class="t" style="left:221.40px;top:681.62px;font-size:11.8px;font-weight:normal;color:#1a1a1a;font-family:'Liberation Sans',sans-serif;transform:scaleX(0.9872);transform-origin:0 0;">Controlled Folder Access</div>
<div class="t" style="left:519.10px;top:680.50px;font-size:10.05px;font-weight:normal;color:#2a2a2a;font-family:'Liberation Mono',sans-serif;">HKLM\SOFTWARE\Microsoft\Windows Defender\Windows Defender Exploit Guard\Controlled Folder Access</div>
<div class="t" style="left:1171.80px;top:681.62px;font-size:11.8px;font-weight:normal;color:#1a1a1a;font-family:'Liberation Sans',sans-serif;">1</div>
<div class="t" style="left:1331.30px;top:681.62px;font-size:11.8px;font-weight:normal;color:#1a1a1a;font-family:'Liberation Sans',sans-serif;transform:scaleX(1.0470);transform-origin:0 0;">Wert nicht konfiguriert</div>
<div class="b" style="left:18px;top:699px;width:1633px;height:19px;background:#f9f9f9"></div>
<div class="b" style="left:18px;top:718px;width:1633px;height:1px;background:#000"></div>
<div class="b" style="left:41.9px;top:700.05px;width:52px;height:17.2px;background:#d32f2f;border-radius:3px"></div>
<svg class="b" style="left:41.9px;top:700.05px;" width="20" height="17" viewBox="0 0 20 17"><path d="M8.3 5.9 L12.6 13.6 M13.7 5.7 L7.6 13.8" stroke="#fff" stroke-width="1.7" fill="none"/></svg>
<div class="t" style="left:59.80px;top:704.61px;font-size:9.1px;font-weight:bold;color:#fff;font-family:'Liberation Sans',sans-serif;">FEHLT</div>
<div class="b" style="left:150.90px;top:700.10px;width:34px;height:17.6px;background:#f57c00;border-radius:3px"></div>
<div class="t" style="left:-132.10px;width:600px;text-align:center;top:702.94px;font-size:8.8px;font-weight:bold;color:#fff;font-family:'Liberation Sans',sans-serif;">HOCH</div>
<div class="t" style="left:221.40px;top:702.62px;font-size:11.8px;font-weight:normal;color:#1a1a1a;font-family:'Liberation Sans',sans-serif;transform:scaleX(1.0285);transform-origin:0 0;">Network Protection</div>
<div class="t" style="left:519.10px;top:701.50px;font-size:10.05px;font-weight:normal;color:#2a2a2a;font-family:'Liberation Mono',sans-serif;">HKLM\SOFTWARE\Policies\Microsoft\Windows Defender\Windows Defender Exploit Guard\Network Protection</div>
<div class="t" style="left:1171.80px;top:702.62px;font-size:11.8px;font-weight:normal;color:#1a1a1a;font-family:'Liberation Sans',sans-serif;">1</div>
<div class="t" style="left:1331.30px;top:702.62px;font-size:11.8px;font-weight:normal;color:#1a1a1a;font-family:'Liberation Sans',sans-serif;transform:scaleX(0.9980);transform-origin:0 0;">Registry-Schlüssel nicht gefunden</div>
<div class="b" style="left:18px;top:719px;width:1633px;height:19px;background:#fff"></div>
<div class="b" style="left:18px;top:738px;width:1633px;height:1px;background:#000"></div>
<div class="b" style="left:41.9px;top:720.05px;width:52px;height:17.2px;background:#d32f2f;border-radius:3px"></div>
<svg class="b" style="left:41.9px;top:720.05px;" width="20" height="17" viewBox="0 0 20 17"><path d="M8.3 5.9 L12.6 13.6 M13.7 5.7 L7.6 13.8" stroke="#fff" stroke-width="1.7" fill="none"/></svg>
<div class="t" style="left:59.80px;top:724.61px;font-size:9.1px;font-weight:bold;color:#fff;font-family:'Liberation Sans',sans-serif;">FEHLT</div>
<div class="b" style="left:150.90px;top:720.10px;width:34px;height:17.6px;background:#f57c00;border-radius:3px"></div>
<div class="t" style="left:-132.10px;width:600px;text-align:center;top:722.94px;font-size:8.8px;font-weight:bold;color:#fff;font-family:'Liberation Sans',sans-serif;">HOCH</div>
<div class="t" style="left:221.40px;top:722.62px;font-size:11.8px;font-weight:normal;color:#1a1a1a;font-family:'Liberation Sans',sans-serif;transform:scaleX(0.9799);transform-origin:0 0;">Attack Surface Reduction Rules</div>
<div class="t" style="left:519.10px;top:721.50px;font-size:10.05px;font-weight:normal;color:#2a2a2a;font-family:'Liberation Mono',sans-serif;">HKLM\SOFTWARE\Microsoft\Windows Defender\Windows Defender Exploit Guard\ASR</div>
<div class="t" style="left:1171.80px;top:722.62px;font-size:11.8px;font-weight:normal;color:#1a1a1a;font-family:'Liberation Sans',sans-serif;">1</div>
<div class="t" style="left:1331.30px;top:722.62px;font-size:11.8px;font-weight:normal;color:#1a1a1a;font-family:'Liberation Sans',sans-serif;transform:scaleX(1.0470);transform-origin:0 0;">Wert nicht konfiguriert</div>
<div class="b" style="left:18px;top:739px;width:1633px;height:19px;background:#f9f9f9"></div>
<div class="b" style="left:18px;top:758px;width:1633px;height:1px;background:#000"></div>
<div class="b" style="left:41.9px;top:740.05px;width:52px;height:17.2px;background:#d32f2f;border-radius:3px"></div>
<svg class="b" style="left:41.9px;top:740.05px;" width="20" height="17" viewBox="0 0 20 17"><path d="M8.3 5.9 L12.6 13.6 M13.7 5.7 L7.6 13.8" stroke="#fff" stroke-width="1.7" fill="none"/></svg>
<div class="t" style="left:59.80px;top:744.61px;font-size:9.1px;font-weight:bold;color:#fff;font-family:'Liberation Sans',sans-serif;">FEHLT</div>
<div class="b" style="left:143.90px;top:740.10px;width:48px;height:17.6px;background:#d32f2f;border-radius:3px"></div>
<div class="t" style="left:-132.10px;width:600px;text-align:center;top:743.21px;font-size:8.5px;font-weight:bold;color:#fff;font-family:'Liberation Sans',sans-serif;">KRITISCH</div>
<div class="t" style="left:221.40px;top:742.62px;font-size:11.8px;font-weight:normal;color:#1a1a1a;font-family:'Liberation Sans',sans-serif;transform:scaleX(0.9872);transform-origin:0 0;">BitLocker Verschlüsselung erzwingen</div>
<div class="t" style="left:519.10px;top:741.50px;font-size:10.05px;font-weight:normal;color:#2a2a2a;font-family:'Liberation Mono',sans-serif;">HKLM\SOFTWARE\Policies\Microsoft\FVE</div>
<div class="t" style="left:1171.80px;top:742.62px;font-size:11.8px;font-weight:normal;color:#1a1a1a;font-family:'Liberation Sans',sans-serif;">1</div>
<div class="t" style="left:1331.30px;top:742.62px;font-size:11.8px;font-weight:normal;color:#1a1a1a;font-family:'Liberation Sans',sans-serif;transform:scaleX(0.9980);transform-origin:0 0;">Registry-Schlüssel nicht gefunden</div>
<div class="b" style="left:18px;top:759px;width:1633px;height:20px;background:#fff"></div>
<div class="b" style="left:18px;top:779px;width:1633px;height:1px;background:#000"></div>
<div class="b" style="left:41.9px;top:760.05px;width:52px;height:17.2px;background:#d32f2f;border-radius:3px"></div>
<svg class="b" style="left:41.9px;top:760.05px;" width="20" height="17" viewBox="0 0 20 17"><path d="M8.3 5.9 L12.6 13.6 M13.7 5.7 L7.6 13.8" stroke="#fff" stroke-width="1.7" fill="none"/></svg>
<div class="t" style="left:59.80px;top:764.61px;font-size:9.1px;font-weight:bold;color:#fff;font-family:'Liberation Sans',sans-serif;">FEHLT</div>
<div class="b" style="left:150.90px;top:760.10px;width:34px;height:17.6px;background:#f57c00;border-radius:3px"></div>
<div class="t" style="left:-132.10px;width:600px;text-align:center;top:762.94px;font-size:8.8px;font-weight:bold;color:#fff;font-family:'Liberation Sans',sans-serif;">HOCH</div>
<div class="t" style="left:221.40px;top:762.62px;font-size:11.8px;font-weight:normal;color:#1a1a1a;font-family:'Liberation Sans',sans-serif;transform:scaleX(0.9995);transform-origin:0 0;">BitLocker PIN Mindestlänge</div>
<div class="t" style="left:519.10px;top:761.50px;font-size:10.05px;font-weight:normal;color:#2a2a2a;font-family:'Liberation Mono',sans-serif;">HKLM\SOFTWARE\Policies\Microsoft\FVE</div>
<div class="t" style="left:1171.80px;top:762.62px;font-size:11.8px;font-weight:normal;color:#1a1a1a;font-family:'Liberation Sans',sans-serif;">8</div>
<div class="t" style="left:1331.30px;top:762.62px;font-size:11.8px;font-weight:normal;color:#1a1a1a;font-family:'Liberation Sans',sans-serif;transform:scaleX(0.9980);transform-origin:0 0;">Registry-Schlüssel nicht gefunden</div>
<div class="b" style="left:18px;top:780px;width:1633px;height:19px;background:#f9f9f9"></div>
<div class="b" style="left:18px;top:799px;width:1633px;height:1px;background:#000"></div>
<div class="b" style="left:41.9px;top:781.05px;width:52px;height:17.2px;background:#d32f2f;border-radius:3px"></div>
<svg class="b" style="left:41.9px;top:781.05px;" width="20" height="17" viewBox="0 0 20 17"><path d="M8.3 5.9 L12.6 13.6 M13.7 5.7 L7.6 13.8" stroke="#fff" stroke-width="1.7" fill="none"/></svg>
<div class="t" style="left:59.80px;top:785.61px;font-size:9.1px;font-weight:bold;color:#fff;font-family:'Liberation Sans',sans-serif;">FEHLT</div>
<div class="b" style="left:150.90px;top:781.10px;width:34px;height:17.6px;background:#f57c00;border-radius:3px"></div>
<div class="t" style="left:-132.10px;width:600px;text-align:center;top:783.94px;font-size:8.8px;font-weight:bold;color:#fff;font-family:'Liberation Sans',sans-serif;">HOCH</div>
<div class="t" style="left:221.40px;top:783.62px;font-size:11.8px;font-weight:normal;color:#1a1a1a;font-family:'Liberation Sans',sans-serif;transform:scaleX(0.9891);transform-origin:0 0;">BitLocker Verschlüsselungsmethode</div>
<div class="t" style="left:519.10px;top:782.50px;font-size:10.05px;font-weight:normal;color:#2a2a2a;font-family:'Liberation Mono',sans-serif;">HKLM\SOFTWARE\Policies\Microsoft\FVE</div>
<div class="t" style="left:1171.80px;top:783.62px;font-size:11.8px;font-weight:normal;color:#1a1a1a;font-family:'Liberation Sans',sans-serif;">7</div>
<div class="t" style="left:1331.30px;top:783.62px;font-size:11.8px;font-weight:normal;color:#1a1a1a;font-family:'Liberation Sans',sans-serif;transform:scaleX(0.9980);transform-origin:0 0;">Registry-Schlüssel nicht gefunden</div>
<div class="b" style="left:18px;top:800px;width:1633px;height:19px;background:#fff"></div>
<div class="b" style="left:18px;top:819px;width:1633px;height:1px;background:#000"></div>
<div class="b" style="left:41.9px;top:801.05px;width:52px;height:17.2px;background:#d32f2f;border-radius:3px"></div>
<svg class="b" style="left:41.9px;top:801.05px;" width="20" height="17" viewBox="0 0 20 17"><path d="M8.3 5.9 L12.6 13.6 M13.7 5.7 L7.6 13.8" stroke="#fff" stroke-width="1.7" fill="none"/></svg>
<div class="t" style="left:59.80px;top:805.61px;font-size:9.1px;font-weight:bold;color:#fff;font-family:'Liberation Sans',sans-serif;">FEHLT</div>
<div class="b" style="left:150.90px;top:801.10px;width:34px;height:17.6px;background:#f57c00;border-radius:3px"></div>
<div class="t" style="left:-132.10px;width:600px;text-align:center;top:803.94px;font-size:8.8px;font-weight:bold;color:#fff;font-family:'Liberation Sans',sans-serif;">HOCH</div>
<div class="t" style="left:221.40px;top:803.62px;font-size:11.8px;font-weight:normal;color:#1a1a1a;font-family:'Liberation Sans',sans-serif;transform:scaleX(0.9895);transform-origin:0 0;">PowerShell Script Block Logging</div>
<div class="t" style="left:519.10px;top:802.50px;font-size:10.05px;font-weight:normal;color:#2a2a2a;font-family:'Liberation Mono',sans-serif;">HKLM\SOFTWARE\Policies\Microsoft\Windows\PowerShell\ScriptBlockLogging</div>
<div class="t" style="left:1171.80px;top:803.62px;font-size:11.8px;font-weight:normal;color:#1a1a1a;font-family:'Liberation Sans',sans-serif;">1</div>
<div class="t" style="left:1331.30px;top:803.62px;font-size:11.8px;font-weight:normal;color:#1a1a1a;font-family:'Liberation Sans',sans-serif;transform:scaleX(0.9980);transform-origin:0 0;">Registry-Schlüssel nicht gefunden</div>
<div class="b" style="left:18px;top:820px;width:1633px;height:19px;background:#f9f9f9"></div>
<div class="b" style="left:18px;top:839px;width:1633px;height:1px;background:#000"></div>
<div class="b" style="left:41.9px;top:821.05px;width:52px;height:17.2px;background:#d32f2f;border-radius:3px"></div>
<svg class="b" style="left:41.9px;top:821.05px;" width="20" height="17" viewBox="0 0 20 17"><path d="M8.3 5.9 L12.6 13.6 M13.7 5.7 L7.6 13.8" stroke="#fff" stroke-width="1.7" fill="none"/></svg>
<div class="t" style="left:59.80px;top:825.61px;font-size:9.1px;font-weight:bold;color:#fff;font-family:'Liberation Sans',sans-serif;">FEHLT</div>
<div class="b" style="left:150.90px;top:821.10px;width:34px;height:17.6px;background:#f57c00;border-radius:3px"></div>
<div class="t" style="left:-132.10px;width:600px;text-align:center;top:823.94px;font-size:8.8px;font-weight:bold;color:#fff;font-family:'Liberation Sans',sans-serif;">HOCH</div>
<div class="t" style="left:221.40px;top:823.62px;font-size:11.8px;font-weight:normal;color:#1a1a1a;font-family:'Liberation Sans',sans-serif;transform:scaleX(0.9802);transform-origin:0 0;">PowerShell Transcription</div>
<div class="t" style="left:519.10px;top:822.50px;font-size:10.05px;font-weight:normal;color:#2a2a2a;font-family:'Liberation Mono',sans-serif;">HKLM\SOFTWARE\Policies\Microsoft\Windows\PowerShell\Transcription</div>
<div class="t" style="left:1171.80px;top:823.62px;font-size:11.8px;font-weight:normal;color:#1a1a1a;font-family:'Liberation Sans',sans-serif;">1</div>
<div class="t" style="left:1331.30px;top:823.62px;font-size:11.8px;font-weight:normal;color:#1a1a1a;font-family:'Liberation Sans',sans-serif;transform:scaleX(0.9980);transform-origin:0 0;">Registry-Schlüssel nicht gefunden</div>
<div class="b" style="left:18px;top:840px;width:1633px;height:20px;background:#fff"></div>
<div class="b" style="left:18px;top:860px;width:1633px;height:1px;background:#000"></div>
<div class="b" style="left:41.9px;top:841.05px;width:52px;height:17.2px;background:#d32f2f;border-radius:3px"></div>
<svg class="b" style="left:41.9px;top:841.05px;" width="20" height="17" viewBox="0 0 20 17"><path d="M8.3 5.9 L12.6 13.6 M13.7 5.7 L7.6 13.8" stroke="#fff" stroke-width="1.7" fill="none"/></svg>
<div class="t" style="left:59.80px;top:845.61px;font-size:9.1px;font-weight:bold;color:#fff;font-family:'Liberation Sans',sans-serif;">FEHLT</div>
<div class="b" style="left:147.90px;top:841.10px;width:40px;height:17.6px;background:#ffa000;border-radius:3px"></div>
<div class="t" style="left:-132.10px;width:600px;text-align:center;top:843.94px;font-size:8.8px;font-weight:bold;color:#fff;font-family:'Liberation Sans',sans-serif;">MITTEL</div>
<div class="t" style="left:221.40px;top:843.62px;font-size:11.8px;font-weight:normal;color:#1a1a1a;font-family:'Liberation Sans',sans-serif;transform:scaleX(1.0068);transform-origin:0 0;">PowerShell Module Logging</div>
<div class="t" style="left:519.10px;top:842.50px;font-size:10.05px;font-weight:normal;color:#2a2a2a;font-family:'Liberation Mono',sans-serif;">HKLM\SOFTWARE\Policies\Microsoft\Windows\PowerShell\ModuleLogging</div>
<div class="t" style="left:1171.80px;top:843.62px;font-size:11.8px;font-weight:normal;color:#1a1a1a;font-family:'Liberation Sans',sans-serif;">1</div>
<div class="t" style="left:1331.30px;top:843.62px;font-size:11.8px;font-weight:normal;color:#1a1a1a;font-family:'Liberation Sans',sans-serif;transform:scaleX(0.9980);transform-origin:0 0;">Registry-Schlüssel nicht gefunden</div>
<div class="b" style="left:18px;top:861px;width:1633px;height:19px;background:#f9f9f9"></div>
<div class="b" style="left:18px;top:880px;width:1633px;height:1px;background:#000"></div>
<div class="b" style="left:41.9px;top:862.05px;width:52px;height:17.2px;background:#d32f2f;border-radius:3px"></div>
<svg class="b" style="left:41.9px;top:862.05px;" width="20" height="17" viewBox="0 0 20 17"><path d="M8.3 5.9 L12.6 13.6 M13.7 5.7 L7.6 13.8" stroke="#fff" stroke-width="1.7" fill="none"/></svg>
<div class="t" style="left:59.80px;top:866.61px;font-size:9.1px;font-weight:bold;color:#fff;font-family:'Liberation Sans',sans-serif;">FEHLT</div>
<div class="b" style="left:150.90px;top:862.10px;width:34px;height:17.6px;background:#f57c00;border-radius:3px"></div>
<div class="t" style="left:-132.10px;width:600px;text-align:center;top:864.94px;font-size:8.8px;font-weight:bold;color:#fff;font-family:'Liberation Sans',sans-serif;">HOCH</div>
<div class="t" style="left:221.40px;top:864.62px;font-size:11.8px;font-weight:normal;color:#1a1a1a;font-family:'Liberation Sans',sans-serif;transform:scaleX(0.9699);transform-origin:0 0;">PowerShell Execution Policy</div>
<div class="t" style="left:519.10px;top:863.50px;font-size:10.05px;font-weight:normal;color:#2a2a2a;font-family:'Liberation Mono',sans-serif;">HKLM\SOFTWARE\Microsoft\PowerShell\1\ShellIds\Microsoft.PowerShell</div>
<div class="t" style="left:1171.80px;top:864.62px;font-size:11.8px;font-weight:normal;color:#1a1a1a;font-family:'Liberation Sans',sans-serif;transform:scaleX(0.9831);transform-origin:0 0;">AllSigned</div>
<div class="t" style="left:1252.00px;top:864.62px;font-size:11.8px;font-weight:normal;color:#1a1a1a;font-family:'Liberation Sans',sans-serif;transform:scaleX(1.0017);transform-origin:0 0;">Unrestricted</div>
<div class="t" style="left:1331.30px;top:864.62px;font-size:11.8px;font-weight:normal;color:#1a1a1a;font-family:'Liberation Sans',sans-serif;transform:scaleX(0.9946);transform-origin:0 0;">Erwartet: AllSigned, Gefunden: Unrestricted</div>
<div class="b" style="left:1651px;top:414px;width:17px;height:469px;background:#f0f0f0"></div>
<div class="b" style="left:1651px;top:414px;width:17px;height:17px;background:#ececec"></div>
<div class="b" style="left:1651px;top:431px;width:17px;height:29px;background:#cdcdcf"></div>
<svg class="b" style="left:1655px;top:421px;" width="9" height="6" viewBox="0 0 9 6"><path d="M0.8 5 L4.5 1.2 L8.2 5" stroke="#8a8a8a" fill="none" stroke-width="1.2"/></svg>
<svg class="b" style="left:1655px;top:871px;" width="9" height="6" viewBox="0 0 9 6"><path d="M0.8 1 L4.5 4.8 L8.2 1" stroke="#9a9a9a" fill="none" stroke-width="1.1"/></svg>
<div class="b" style="left:17px;top:896px;width:1568px;height:34px;background:#fff;border:1px solid #e3e5e8;border-radius:5px"></div>
<svg class="b" style="left:739px;top:906.5px;" width="13" height="15" viewBox="0 0 13 15"><rect x="1.6" y="3.6" width="10" height="9.6" rx="1.6" fill="#f6f9fc" stroke="#222" stroke-width="1.1"/><rect x="1" y="10.6" width="11.2" height="3.2" rx="1" fill="#111"/><path d="M6.6 0.6 L9 3.8 H7.6 V6.8 H5.6 V3.8 H4.2 Z" fill="#111"/></svg>
<div class="t" style="left:757.30px;top:907.41px;font-size:11.7px;font-weight:normal;color:#1a1a1a;font-family:'Liberation Sans',sans-serif;">Bericht exportieren...</div>
<div class="b" style="left:1585px;top:896px;width:84px;height:34px;background:#00796b;border-radius:5px"></div>
<div class="t" style="left:1601.00px;top:907.64px;font-size:11px;font-weight:bold;color:#fff;font-family:'Liberation Sans',sans-serif;">Schließen</div></body></html>
